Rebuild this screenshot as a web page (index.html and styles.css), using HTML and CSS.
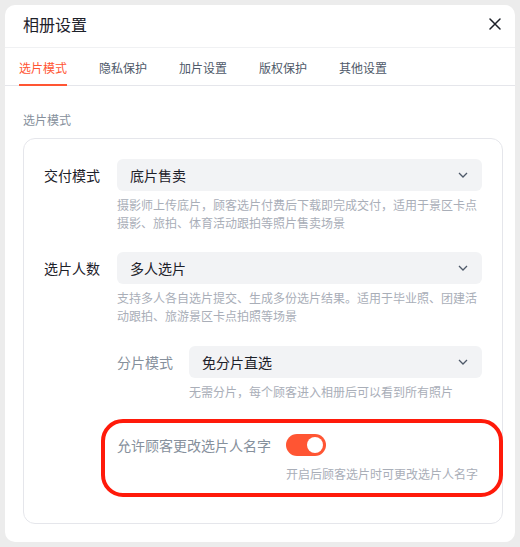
FILE: index.html
```html
<!DOCTYPE html>
<html lang="zh-CN">
<head>
<meta charset="utf-8">
<title>相册设置</title>
<link rel="stylesheet" href="styles.css">
</head>
<body>
<div class="panel">
  <div class="header">
    <div class="title">相册设置</div>
    <div class="close">
      <svg width="12" height="12" viewBox="0 0 12 12"><path d="M1 1 L11 11 M11 1 L1 11" stroke="#1d2129" stroke-width="1.5" fill="none" stroke-linecap="round"/></svg>
    </div>
  </div>
  <div class="tabs">
    <div class="tab active">选片模式</div>
    <div class="tab">隐私保护</div>
    <div class="tab">加片设置</div>
    <div class="tab">版权保护</div>
    <div class="tab">其他设置</div>
  </div>
  <div class="content">
    <div class="section-title">选片模式</div>
    <div class="card">
      <div class="row">
        <div class="label">交付模式</div>
        <div class="field">
          <div class="select"><span>底片售卖</span>
            <svg class="chev" width="12" height="12" viewBox="0 0 12 12"><path d="M2 4 L6 8 L10 4" stroke="#4e5969" stroke-width="1.3" fill="none"/></svg>
          </div>
          <div class="desc">摄影师上传底片，顾客选片付费后下载即完成交付，适用于景区卡点摄影、旅拍、体育活动跟拍等照片售卖场景</div>
        </div>
      </div>
      <div class="row gap">
        <div class="label">选片人数</div>
        <div class="field">
          <div class="select"><span>多人选片</span>
            <svg class="chev" width="12" height="12" viewBox="0 0 12 12"><path d="M2 4 L6 8 L10 4" stroke="#4e5969" stroke-width="1.3" fill="none"/></svg>
          </div>
          <div class="desc">支持多人各自选片提交、生成多份选片结果。适用于毕业照、团建活动跟拍、旅游景区卡点拍照等场景</div>
        </div>
      </div>
      <div class="sub">
        <div class="row">
          <div class="label sublabel">分片模式</div>
          <div class="field">
            <div class="select"><span>免分片直选</span>
              <svg class="chev" width="12" height="12" viewBox="0 0 12 12"><path d="M2 4 L6 8 L10 4" stroke="#4e5969" stroke-width="1.3" fill="none"/></svg>
            </div>
            <div class="desc">无需分片，每个顾客进入相册后可以看到所有照片</div>
          </div>
        </div>
        <div class="toggle-block">
          <div class="toggle-label">允许顾客更改选片人名字</div>
          <div class="switch"><div class="knob"></div></div>
          <div class="desc toggle-desc">开启后顾客选片时可更改选片人名字</div>
          <div class="highlight"></div>
        </div>
      </div>
    </div>
  </div>
</div>
</body>
</html>
```

FILE: styles.css
```css
* { box-sizing: border-box; }
html, body { margin: 0; padding: 0; }
body {
  background: #ececec;
  font-family: "Noto Sans CJK SC", "Noto Sans", sans-serif;
  color: #1d2129;
  width: 520px;
  height: 547px;
  overflow: hidden;
}
.panel {
  margin: 5px;
  width: 510px;
  height: 537px;
  background: #fff;
  border-radius: 10px;
  overflow: hidden;
}
.header {
  height: 43px;
  padding: 8px 14px 0 18px;
  display: flex;
  justify-content: space-between;
  align-items: flex-start;
  border-bottom: 1px solid #f0f1f3;
}
.title {
  font-size: 16px;
  line-height: 22px;
  color: #1d2129;
}
.close {
  height: 22px;
  display: flex;
  align-items: center;
}
.close svg { display: block; }
.tabs {
  display: flex;
  gap: 32px;
  padding-left: 14px;
  height: 38px;
  border-bottom: 1px solid #e5e6eb;
}
.tab {
  position: relative;
  font-size: 12px;
  line-height: 18px;
  padding-top: 11px;
  height: 37px;
  color: #4e5969;
}
.tab.active { color: #ff5533; }
.tab.active::after {
  content: "";
  position: absolute;
  left: 0;
  right: 0;
  bottom: -1px;
  height: 2px;
  background: #ff5533;
}
.content {
  padding: 25px 12px 0 18px;
}
.section-title {
  font-size: 12px;
  line-height: 18px;
  color: #86909c;
  margin-bottom: 9px;
}
.card {
  border: 1px solid #e5e6eb;
  border-radius: 12px;
  padding: 20px 20px 40px 20px;
}
.row {
  display: flex;
}
.row.gap { margin-top: 20px; }
.label {
  width: 73px;
  flex: none;
  font-size: 14px;
  line-height: 32px;
  color: #1d2129;
}
.sublabel { width: 72px; color: #86909c; }
.field { flex: 1; min-width: 0; }
.select {
  height: 32px;
  background: #f2f3f5;
  border-radius: 6px;
  padding: 0 13px 0 13px;
  display: flex;
  align-items: center;
  justify-content: space-between;
  font-size: 14px;
  color: #1d2129;
}
.chev { display: block; }
.desc {
  margin-top: 5px;
  font-size: 12px;
  line-height: 18px;
  color: #a9aeb8;
}
.sub {
  margin-top: 21px;
  margin-left: 73px;
}
.toggle-block {
  position: relative;
  margin-top: 32px;
  display: grid;
  grid-template-columns: auto 1fr;
  column-gap: 15px;
  align-items: center;
}
.toggle-label {
  font-size: 14px;
  line-height: 24px;
  color: #86909c;
}
.switch {
  width: 40px;
  height: 22px;
  border-radius: 11px;
  background: #ff5533;
  position: relative;
}
.knob {
  position: absolute;
  right: 3px;
  top: 3px;
  width: 16px;
  height: 16px;
  border-radius: 50%;
  background: #fff;
}
.toggle-desc {
  grid-column: 2;
  margin-top: 8px;
}
.highlight {
  position: absolute;
  top: -14px;
  bottom: -14px;
  left: -16px;
  right: -21px;
  border: 4px solid #ff1a0a;
  border-radius: 22px;
  pointer-events: none;
}
```
